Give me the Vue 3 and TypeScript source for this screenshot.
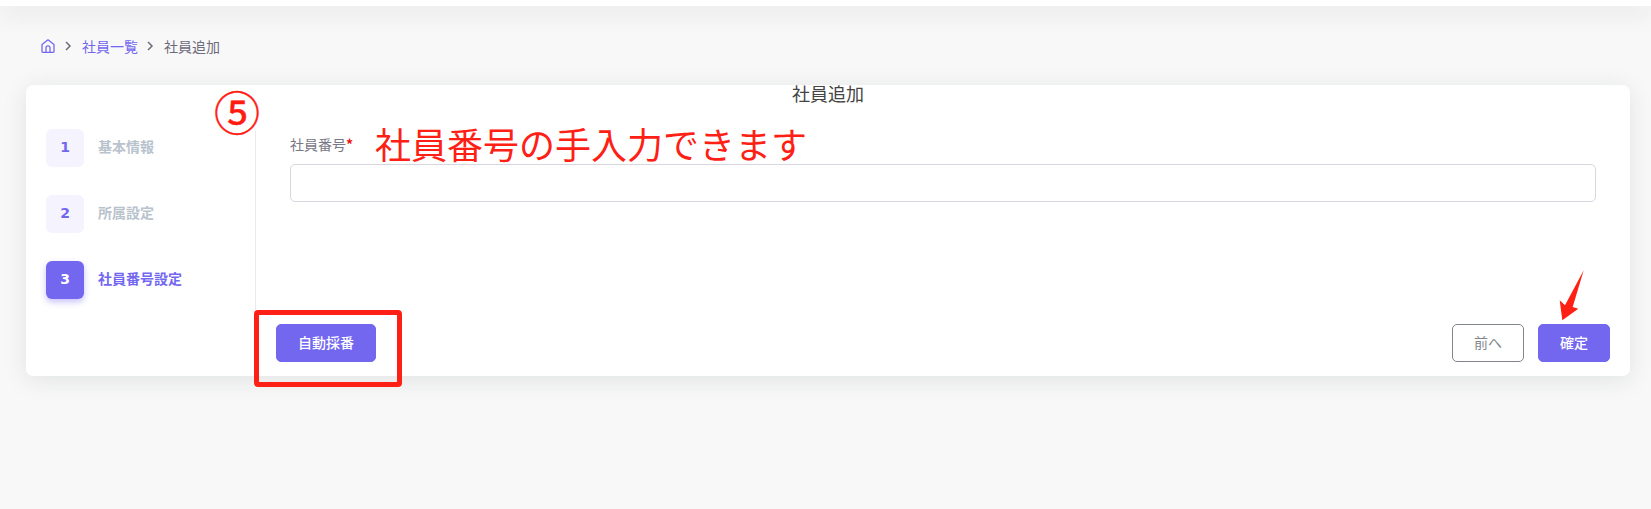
<template>
  <div class="page">
    <header class="topbar"></header>

    <nav class="crumbs">
      <svg class="home" width="16" height="16" viewBox="0 0 16 16" fill="none" stroke="#7367f0" stroke-width="1.3" stroke-linejoin="round" stroke-linecap="round">
        <path d="M2 6.6 8 1.8l6 4.8v6.6a1.2 1.2 0 0 1-1.2 1.2H3.2A1.2 1.2 0 0 1 2 13.200z" />
        <path d="M6 14.400V9.800a2 2 0 0 1 4 0v4.600" />
      </svg>
      <svg class="chev" width="8" height="10" viewBox="0 0 8 10" fill="none" stroke="#6e6b7b" stroke-width="1.500"><path d="M2 1 6 5 2 9" /></svg>
      <a class="crumb-link">社員一覧</a>
      <svg class="chev" width="8" height="10" viewBox="0 0 8 10" fill="none" stroke="#6e6b7b" stroke-width="1.500"><path d="M2 1 6 5 2 9" /></svg>
      <span class="crumb-now">社員追加</span>
    </nav>

    <section class="card">
      <h2 class="card-title">社員追加</h2>
      <div class="card-body">
        <ul class="steps">
          <li v-for="s in steps" :key="s.no" class="step" :class="{ active: s.active }">
            <span class="step-no">{{ s.no }}</span>
            <span class="step-name">{{ s.name }}</span>
          </li>
        </ul>
        <div class="content">
          <div class="form">
            <label class="field-label">社員番号<em>*</em></label>
            <input class="field-input" type="text" />
          </div>
          <div class="actions">
            <button class="btn primary">自動採番</button>
            <div class="actions-right">
              <button class="btn outline">前へ</button>
              <button class="btn primary">確定</button>
            </div>
          </div>
        </div>
      </div>
    </section>

    <!-- annotations pasted on the screenshot -->
    <div class="note-num">⑤</div>
    <div class="note-text">社員番号の手入力できます</div>
    <div class="note-box"></div>
    <svg class="note-arrow" width="30" height="56" viewBox="0 0 30 56">
      <path d="M27.700 .3 16.700 37l5.600 1.700-16 11.600-2.600-20L9 35.300z" fill="#ff2015" />
    </svg>
  </div>
</template>

<script setup lang="ts">
const steps = [
  { no: 1, name: '基本情報', active: false },
  { no: 2, name: '所属設定', active: false },
  { no: 3, name: '社員番号設定', active: true },
]
</script>

<style>
html,
body {
  margin: 0;
  background: #f8f8f8;
}
</style>

<style scoped>
.page {
  position: relative;
  height: 509px;
  overflow: hidden;
  background: #f8f8f8;
  font-family: "Noto Sans CJK JP", "Noto Sans", sans-serif;
  font-size: 14px;
  color: #6e6b7b;
}

.topbar {
  position: relative;
  height: 6px;
  background: #fff;
  box-shadow: 0 4px 24px rgba(34, 41, 47, 0.2);
}

.crumbs {
  display: flex;
  align-items: center;
  height: 20px;
  margin: 30px 0 29px 40px;
}

.home {
  margin-right: 8px;
}

.chev {
  margin-right: 10px;
}

.crumb-link {
  color: #7367f0;
  margin-right: 8px;
}

.card {
  margin-left: 26px;
  width: 1604px;
  height: 291px;
  background: #fff;
  border-radius: 7px;
  box-shadow: 0 4px 24px rgba(34, 41, 47, 0.1);
  display: flex;
  flex-direction: column;
}

.card-title {
  margin: 0;
  height: 18px;
  line-height: 16px;
  font-size: 18px;
  font-weight: 400;
  text-align: center;
  color: #444;
}

.card-body {
  flex: 1;
  display: flex;
  min-height: 0;
}

.steps {
  list-style: none;
  margin: 0;
  padding: 26px 0 0 20px;
  width: 209px;
  height: 181px;
  border-right: 1px solid #ebe9f1;
  display: flex;
  flex-direction: column;
  gap: 28px;
}

.step {
  display: flex;
  align-items: center;
  gap: 14px;
  height: 38px;
}

.step-no {
  width: 38px;
  height: 36px;
  padding-bottom: 2px;
  border-radius: 6px;
  background: rgba(115, 103, 240, 0.08);
  color: #7367f0;
  font-family: "DejaVu Sans", sans-serif;
  font-weight: 700;
  display: flex;
  align-items: center;
  justify-content: center;
}

.step-name {
  font-size: 14px;
  font-weight: 700;
  color: #b9c3cd;
  padding-bottom: 4px;
}

.step.active .step-no {
  background: #7367f0;
  color: #fff;
  box-shadow: 0 3px 6px rgba(115, 103, 240, 0.4);
}

.step.active .step-name {
  color: #7367f0;
}

.content {
  flex: 1;
  display: flex;
  flex-direction: column;
  justify-content: space-between;
  padding: 32px 20px 14px 20px;
}

.form {
  padding: 0 14px;
}

.field-label {
  display: block;
  height: 20px;
  line-height: 19px;
  margin-bottom: 9px;
  color: #7a7786;
}

.field-label em {
  color: #f01010;
  font-style: normal;
  font-weight: 700;
}

.field-input {
  display: block;
  width: 100%;
  height: 38px;
  box-sizing: border-box;
  border: 1px solid #d8d6de;
  border-radius: 5px;
  background: #fff;
  outline: none;
}

.actions {
  display: flex;
  justify-content: space-between;
}

.actions-right {
  display: flex;
  gap: 14px;
}

.btn {
  height: 38px;
  padding: 0 21px 2px;
  border-radius: 5px;
  font-family: inherit;
  font-size: 14px;
  font-weight: 500;
  cursor: pointer;
}

.btn.primary {
  background: #7367f0;
  border: 1px solid #7367f0;
  color: #fff;
}

.btn.outline {
  background: #fff;
  border: 1px solid #82868b;
  color: #82868b;
  font-weight: 400;
}

.note-num {
  position: absolute;
  left: 212px;
  top: 88px;
  width: 50px;
  height: 43px;
  background: #fff;
  color: #ff1a12;
  font-size: 46px;
  font-weight: 400;
  line-height: 45px;
  text-align: center;
  -webkit-text-stroke: 0.5px #ff1a12;
}

.note-text {
  position: absolute;
  left: 375px;
  top: 118px;
  font-size: 36px;
  line-height: 50px;
  font-weight: 400;
  white-space: nowrap;
  color: #ff2015;
}

.note-box {
  position: absolute;
  left: 254px;
  top: 310px;
  width: 148px;
  height: 77px;
  box-sizing: border-box;
  border: 5px solid #ff2015;
  border-radius: 4px;
}

.note-arrow {
  position: absolute;
  left: 1556px;
  top: 270px;
}
</style>
